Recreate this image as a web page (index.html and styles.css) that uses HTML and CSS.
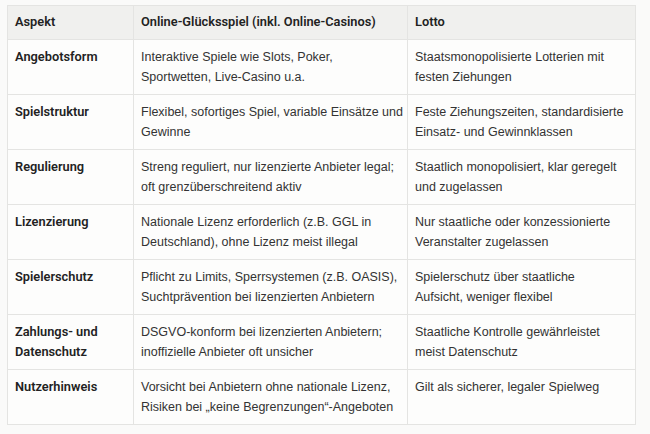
FILE: index.html
```html
<!DOCTYPE html>
<html lang="de">
<head>
<meta charset="utf-8">
<link rel="stylesheet" href="styles.css">
</head>
<body>
<div class="wrap">
<table class="cmp">
  <colgroup>
    <col class="c1"><col class="c2"><col class="c3">
  </colgroup>
  <thead>
    <tr><th>Aspekt</th><th>Online-Glücksspiel (inkl. Online-Casinos)</th><th>Lotto</th></tr>
  </thead>
  <tbody>
    <tr><th>Angebotsform</th><td>Interaktive Spiele wie Slots, Poker,<br>Sportwetten, Live-Casino u.a.</td><td>Staatsmonopolisierte Lotterien mit<br>festen Ziehungen</td></tr>
    <tr><th>Spielstruktur</th><td>Flexibel, sofortiges Spiel, variable Einsätze und<br>Gewinne</td><td>Feste Ziehungszeiten, standardisierte<br>Einsatz- und Gewinnklassen</td></tr>
    <tr><th>Regulierung</th><td>Streng reguliert, nur lizenzierte Anbieter legal;<br>oft grenzüberschreitend aktiv</td><td>Staatlich monopolisiert, klar geregelt<br>und zugelassen</td></tr>
    <tr><th>Lizenzierung</th><td>Nationale Lizenz erforderlich (z.B. GGL in<br>Deutschland), ohne Lizenz meist illegal</td><td>Nur staatliche oder konzessionierte<br>Veranstalter zugelassen</td></tr>
    <tr><th>Spielerschutz</th><td>Pflicht zu Limits, Sperrsystemen (z.B. OASIS),<br>Suchtprävention bei lizenzierten Anbietern</td><td>Spielerschutz über staatliche<br>Aufsicht, weniger flexibel</td></tr>
    <tr><th>Zahlungs- und<br>Datenschutz</th><td>DSGVO-konform bei lizenzierten Anbietern;<br>inoffizielle Anbieter oft unsicher</td><td>Staatliche Kontrolle gewährleistet<br>meist Datenschutz</td></tr>
    <tr><th>Nutzerhinweis</th><td>Vorsicht bei Anbietern ohne nationale Lizenz,<br>Risiken bei „keine Begrenzungen“-Angeboten</td><td>Gilt als sicherer, legaler Spielweg</td></tr>
  </tbody>
</table>
</div>
</body>
</html>
```

FILE: styles.css
```css
html, body {
  margin: 0;
  padding: 0;
  background: #fafaf9;
}
body {
  font-family: "Liberation Sans", Arial, sans-serif;
  color: #333333;
}
.wrap {
  padding: 5px 0 0 7px;
}
.cmp {
  border-collapse: collapse;
  width: 628px;
  table-layout: fixed;
  background: #fdfdfc;
  font-size: 12.5px;
  line-height: 20px;
}
.c1 { width: 126px; }
.c2 { width: 274px; }
.c3 { width: 228px; }
.cmp th, .cmp td {
  border: 1px solid #e4e4e2;
  padding: 7px 0 7px 7px;
  text-align: left;
  vertical-align: top;
  white-space: nowrap;
}
.cmp th {
  font-family: Roboto, "Liberation Sans", Arial, sans-serif;
  font-weight: 600;
  font-size: 12.8px;
  color: #222222;
}
.cmp thead th {
  background: #f0f0ee;
  padding-top: 6px;
}
.cmp tbody tr {
  height: 55px;
}
```
